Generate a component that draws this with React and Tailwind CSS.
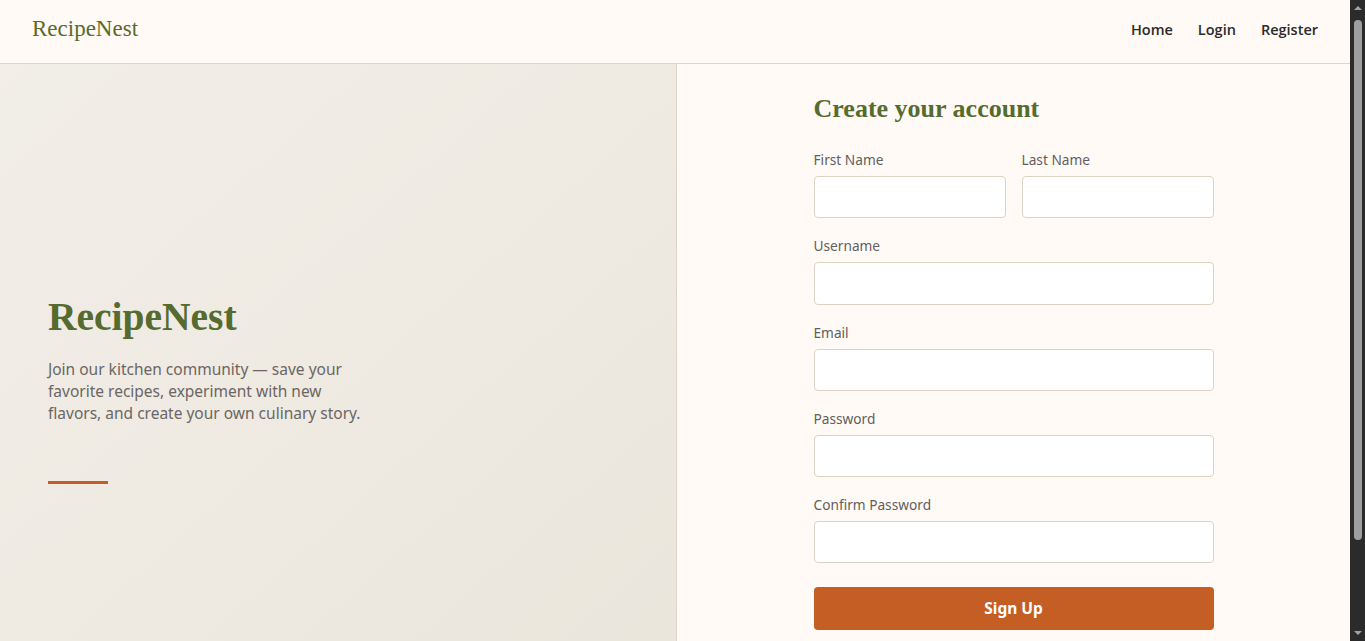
import React from "react";

const sans = { fontFamily: '"Noto Sans", "Open Sans", sans-serif' };

function Field({ label, type = "text" }) {
  return (
    <div className="flex flex-col">
      <label className="mb-1.5 text-[13.7px] leading-5 text-[#5f5f5f]">{label}</label>
      <input
        type={type}
        className="h-[42.25px] w-full rounded-[4px] border border-[#ddd3c5] bg-white px-3 text-sm outline-none"
      />
    </div>
  );
}

function Scrollbar() {
  return (
    <div className="flex w-[15px] shrink-0 flex-col items-center bg-[#2b2b2b]">
      <div className="mt-[6px] h-0 w-0 border-x-[4px] border-b-[4px] border-x-transparent border-b-[#a3a3a3]" />
      <div className="mt-[10px] mb-[10px] w-[8px] flex-1 rounded-full bg-[#9f9f9f]" style={{ maxHeight: 520 }} />
      <div className="mt-auto mb-[6px] h-0 w-0 border-x-[4px] border-t-[4px] border-x-transparent border-t-[#a3a3a3]" />
    </div>
  );
}

export default function App() {
  return (
    <div className="flex h-screen overflow-hidden bg-[#fffaf5] text-[#2b2b2b]" style={sans}>
      <div className="min-w-0 flex-1">
        <header className="flex h-[64px] items-center justify-between border-b border-[#ddd5c8] bg-[#fffaf5] px-8 pb-1">
          <div className="font-['Liberation_Serif',serif] text-[23px] text-[#5a6b2a]">RecipeNest</div>
          <nav className="flex items-center gap-[25px] font-['Open_Sans',sans-serif] text-[14.5px] font-semibold text-[#2b2b2b]">
            <a href="#">Home</a>
            <a href="#">Login</a>
            <a href="#">Register</a>
          </nav>
        </header>

        <main className="grid grid-cols-[677px_1fr]">
          <section className="flex flex-col justify-center border-r border-[#ddd5c8] bg-gradient-to-br from-[#f2eee8] to-[#ebe6dc] px-12 pt-[43px]">
            <h1 className="font-['Liberation_Serif',serif] text-[39.5px] font-bold leading-[48px] text-[#556b2f]">
              RecipeNest
            </h1>
            <p className="mt-[17px] max-w-[330px] text-[15.5px] leading-[22px] text-[#6b6663]">
              Join our kitchen community — save your favorite recipes, experiment with new flavors, and create your own culinary story.
            </p>
            <div className="mt-[57px] h-[3px] w-[60px] bg-[#c45e24]" />
          </section>

          <section className="flex justify-center bg-[#fffaf5] pt-[29px] pb-[40px]">
            <form className="w-[400px]" onSubmit={(e) => e.preventDefault()}>
              <h2 className="mb-[25px] font-['Liberation_Serif',serif] text-[26px] font-bold leading-[32px] text-[#556b2f]">
                Create your account
              </h2>
              <div className="flex flex-col gap-[18px]">
                <div className="grid grid-cols-2 gap-4">
                  <Field label="First Name" />
                  <Field label="Last Name" />
                </div>
                <Field label="Username" />
                <Field label="Email" type="email" />
                <Field label="Password" type="password" />
                <Field label="Confirm Password" type="password" />
              </div>
              <button
                type="submit"
                className="mt-6 h-[43px] w-full rounded-[4px] bg-[#c45e24] text-[15.5px] font-bold text-white"
              >
                Sign Up
              </button>
            </form>
          </section>
        </main>
      </div>
      <Scrollbar />
    </div>
  );
}
